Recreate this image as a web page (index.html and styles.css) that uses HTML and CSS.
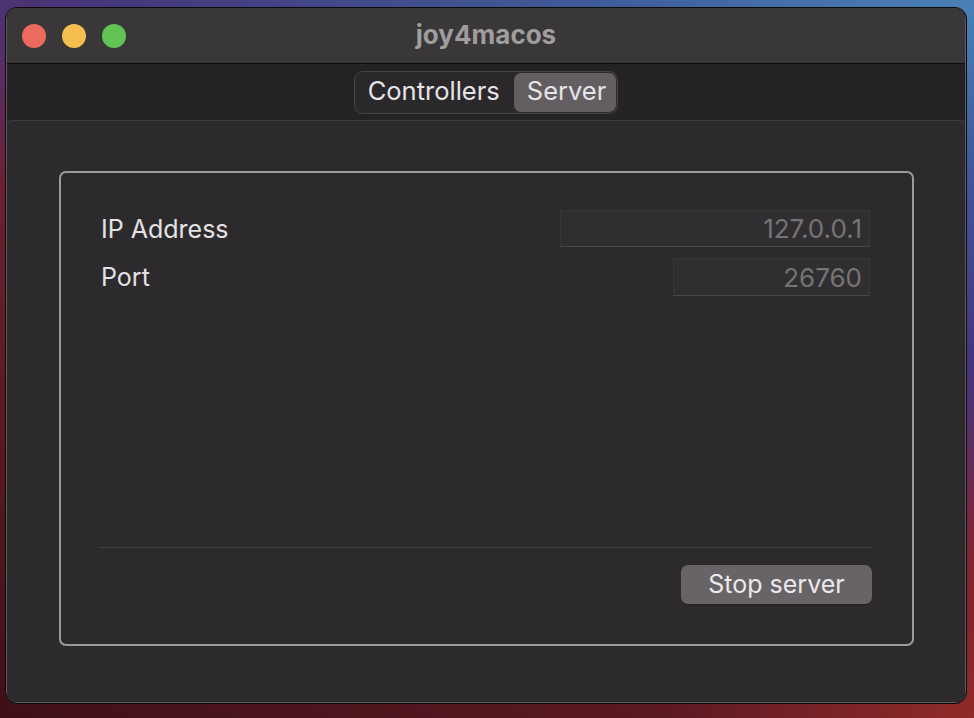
FILE: index.html
```html
<!DOCTYPE html>
<html>
<head>
<meta charset="utf-8">
<link rel="stylesheet" href="styles.css">
</head>
<body>
<div class="window">
  <div class="titlebar">
    <div class="lights">
      <span class="light red"></span>
      <span class="light yellow"></span>
      <span class="light green"></span>
    </div>
    <div class="title">joy4macos</div>
    <div></div>
  </div>
  <div class="toolbar">
    <div class="seg">
      <div class="seg-item">Controllers</div>
      <div class="seg-item active">Server</div>
    </div>
  </div>
  <div class="panel">
    <div class="group">
      <div class="row">
        <span class="label">IP Address</span>
        <div class="field ip">127.0.0.1</div>
      </div>
      <div class="row row2">
        <span class="label">Port</span>
        <div class="field port">26760</div>
      </div>
      <div class="spacer"></div>
      <div class="sep"></div>
      <div class="actions">
        <button class="btn">Stop server</button>
      </div>
    </div>
  </div>
</div>
</body>
</html>
```

FILE: styles.css
```css
html, body {
  margin: 0;
  padding: 0;
  width: 974px;
  height: 718px;
  overflow: hidden;
}
body {
  font-family: Inter, "Liberation Sans", sans-serif;
  background:
    radial-gradient(circle at 100% 100%, rgba(150, 45, 40, 0.85), rgba(150, 45, 40, 0) 320px),
    linear-gradient(202deg, #4a82b6 0%, #3f5c98 14%, #45367a 32%, #5a2c66 42%, #6e2030 52%, #5a1822 75%, #3e1016 100%);
  padding-top: 7px;
  padding-left: 5px;
  box-sizing: border-box;
}
.window {
  width: 962px;
  height: 697px;
  box-sizing: border-box;
  border: 1px solid #0c0b0c;
  border-radius: 12px;
  overflow: hidden;
  display: flex;
  flex-direction: column;
  background: #2d2a2d;
  box-shadow: inset 0 0 0 1px #5f5c5f;
  position: relative;
}
.titlebar {
  height: 55px;
  flex: none;
  background: #3a3739;
  border-bottom: 1px solid #0c0b0c;
  border-top: 1px solid #5a5758;
  box-sizing: content-box;
  margin-top: -1px;
  display: grid;
  grid-template-columns: 1fr auto 1fr;
  align-items: center;
  margin-left: 1px;
  margin-right: 1px;
}
.lights {
  display: flex;
  gap: 16px;
  padding-left: 15px;
}
.light {
  width: 24px;
  height: 24px;
  border-radius: 50%;
  display: block;
}
.red { background: #ed6a5e; }
.yellow { background: #f5be4f; }
.green { background: #61c454; }
.title {
  color: #a09d9f;
  font-weight: 700;
  font-size: 26px;
  line-height: 1;
  padding-bottom: 2px;
}
.toolbar {
  height: 56px;
  flex: none;
  background: #252225;
  display: flex;
  align-items: center;
  justify-content: center;
  margin: 0 1px;
}
.seg {
  display: flex;
  height: 43px;
  box-sizing: border-box;
  border: 1px solid #464346;
  border-radius: 9px;
  background: #2b282b;
  padding: 1px;
}
.seg-item {
  display: flex;
  align-items: center;
  color: #e6e4e6;
  font-size: 25.5px;
  padding: 0 14px 3px 12px;
  border-radius: 7px;
}
.seg-item.active {
  background: #625e62;
  padding: 0 10px 3px 13px;
}
.panel {
  flex: 1;
  margin: 0 1px 1px;
  background: #2d2a2d;
  border-top: 1px solid #3f3c3f;
  border-radius: 6px 6px 0 0;
  display: flex;
  padding: 50px 51px 56px 52px;
}
.group {
  flex: 1;
  border: 2px solid #9d9a9d;
  border-radius: 7px;
  padding: 37px 40px 40px 39px;
  display: flex;
  flex-direction: column;
}
.row {
  display: flex;
  align-items: center;
  justify-content: space-between;
  padding-right: 2px;
}
.row2 {
  margin-top: 11px;
}
.label {
  color: #e4e2e4;
  font-size: 25px;
  padding-left: 1px;
}
.field {
  box-sizing: border-box;
  background: #312e31;
  border: 1px solid #3a373a;
  border-bottom-color: #4a474a;
  color: #767376;
  font-size: 26px;
  text-align: right;
  padding-right: 7px;
  display: flex;
  align-items: center;
  justify-content: flex-end;
}
.field.ip {
  width: 310px;
  height: 37px;
}
.field.port {
  width: 197px;
  height: 38px;
}
.spacer {
  flex: 1;
}
.sep {
  height: 1px;
  background: #444144;
}
.actions {
  display: flex;
  justify-content: flex-end;
  margin-top: 17px;
}
.btn {
  width: 191px;
  height: 39px;
  border: none;
  border-radius: 7px;
  background: #676366;
  color: #ebe9eb;
  font-family: Inter, "Liberation Sans", sans-serif;
  font-size: 25px;
  padding: 0 0 2px;
  box-shadow: 0 1px 1px rgba(0, 0, 0, 0.25);
}
```
